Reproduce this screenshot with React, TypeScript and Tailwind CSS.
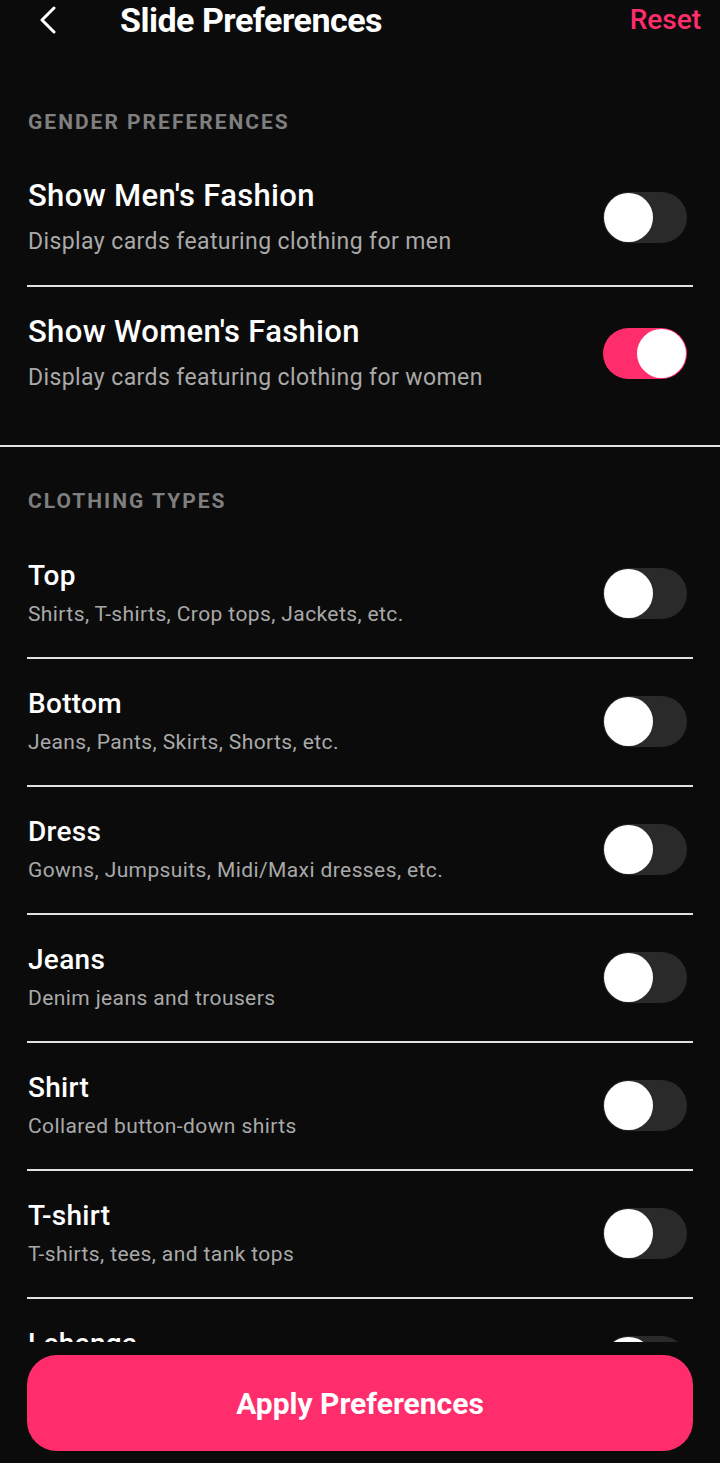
import React, { useState } from 'react';

type Pref = {
    key: string;
    title: string;
    desc: string;
};

const genderPrefs: Pref[] = [
    { key: 'men', title: "Show Men's Fashion", desc: 'Display cards featuring clothing for men' },
    { key: 'women', title: "Show Women's Fashion", desc: 'Display cards featuring clothing for women' },
];

const clothingTypes: Pref[] = [
    { key: 'top', title: 'Top', desc: 'Shirts, T-shirts, Crop tops, Jackets, etc.' },
    { key: 'bottom', title: 'Bottom', desc: 'Jeans, Pants, Skirts, Shorts, etc.' },
    { key: 'dress', title: 'Dress', desc: 'Gowns, Jumpsuits, Midi/Maxi dresses, etc.' },
    { key: 'jeans', title: 'Jeans', desc: 'Denim jeans and trousers' },
    { key: 'shirt', title: 'Shirt', desc: 'Collared button-down shirts' },
    { key: 'tshirt', title: 'T-shirt', desc: 'T-shirts, tees, and tank tops' },
    { key: 'lehenga', title: 'Lehenga', desc: 'Traditional lehenga cholis' },
];

function Toggle({ on, onChange }: { on: boolean; onChange: () => void }) {
    return (
        <button
            onClick={onChange}
            className={`flex h-[51px] w-[84px] shrink-0 items-center rounded-full p-px ${
                on ? 'justify-end bg-[#ff2d6b]' : 'justify-start bg-[#2a2a2a]'
            }`}
        >
            <span className="block h-[49px] w-[49px] rounded-full bg-white" />
        </button>
    );
}

export default function App() {
    const [prefs, setPrefs] = useState<Record<string, boolean>>({ women: true });

    const flip = (key: string) => setPrefs((prev) => ({ ...prev, [key]: !prev[key] }));

    return (
        <div
            className="flex h-[1463px] w-[720px] flex-col overflow-hidden bg-[#0b0b0b] text-white"
            style={{ fontFamily: 'Roboto, "Noto Sans", sans-serif' }}
        >
            {/* header */}
            <div className="flex h-[40px] shrink-0 items-center pl-[36px] pr-[19px]">
                <button className="flex h-[30px] w-[24px] items-center justify-center">
                    <svg width="20" height="28" viewBox="0 0 20 28" fill="none">
                        <polyline points="16,2 4,14 16,26" stroke="white" strokeWidth="3" strokeLinecap="round" strokeLinejoin="round" />
                    </svg>
                </button>
                <h1 className="ml-[60px] text-[34px] font-bold leading-[40px] tracking-[-0.5px]">Slide Preferences</h1>
                <button className="ml-auto text-[28px] font-medium leading-[40px] text-[#ff2d6b]">Reset</button>
            </div>

            <div className="flex-1 overflow-hidden">
                {/* gender */}
                <div className="pt-[70px] pb-[24px]">
                    <div className="mb-[17px] px-[28px] text-[21px] font-bold leading-[24px] tracking-[2px] text-[#7f7f7f]">
                        GENDER PREFERENCES
                    </div>
                    {genderPrefs.map((p, i) => (
                        <div key={p.key} className={`mx-[27px] ${i < genderPrefs.length - 1 ? 'border-b-2 border-[#e2e2e2]' : ''}`}>
                            <div className="flex items-center justify-between pt-[28px] pb-[29px] pl-px pr-[6px]">
                                <div>
                                    <div className="text-[31px] font-medium leading-[34px] tracking-[0.35px]">{p.title}</div>
                                    <div className="mt-[15px] text-[23px] leading-[28px] tracking-[0.4px] text-[#a9a9a9]">{p.desc}</div>
                                </div>
                                <Toggle on={!!prefs[p.key]} onChange={() => flip(p.key)} />
                            </div>
                        </div>
                    ))}
                </div>

                <div className="h-[2px] bg-[#e2e2e2]" />

                {/* clothing types */}
                <div className="pt-[42px]">
                    <div className="mb-[18px] px-[28px] text-[21px] font-bold leading-[24px] tracking-[2px] text-[#7f7f7f]">
                        CLOTHING TYPES
                    </div>
                    {clothingTypes.map((p) => (
                        <div key={p.key} className="mx-[27px] border-b-2 border-[#e2e2e2]">
                            <div className="flex items-center justify-between pt-[29px] pb-[31px] pl-px pr-[6px]">
                                <div>
                                    <div className="text-[28px] font-medium leading-[32px] tracking-[0.3px]">{p.title}</div>
                                    <div className="mt-[10px] text-[21px] leading-[24px] tracking-[0.4px] text-[#a9a9a9]">{p.desc}</div>
                                </div>
                                <Toggle on={!!prefs[p.key]} onChange={() => flip(p.key)} />
                            </div>
                        </div>
                    ))}
                </div>
            </div>

            {/* footer */}
            <div className="shrink-0 px-[27px] pt-[13px] pb-[12px]">
                <button className="flex h-[96px] w-full items-center justify-center rounded-[30px] bg-[#ff2d6b] text-[30px] font-bold">
                    Apply Preferences
                </button>
            </div>
        </div>
    );
}
